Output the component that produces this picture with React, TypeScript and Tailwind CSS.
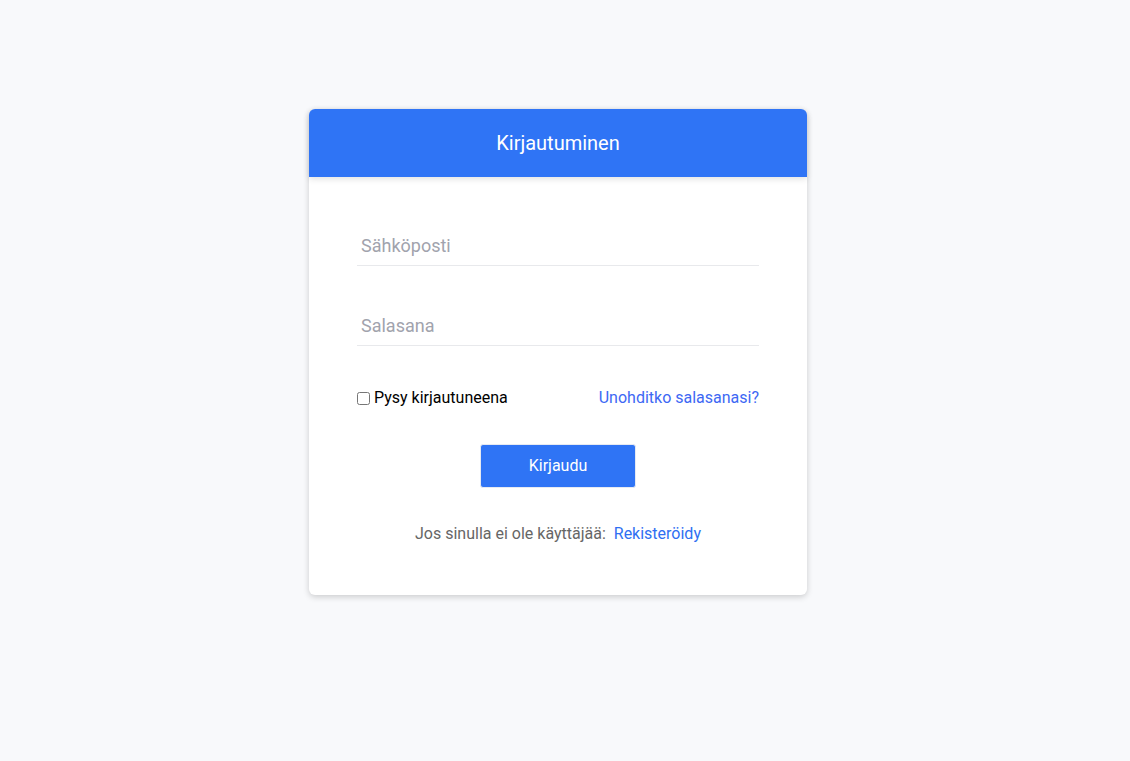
import React from "react";

export default function App() {
  return (
    <div className="min-h-[761px] w-full bg-[#f8f9fb] flex justify-center pt-[109px] pr-[14px]" style={{ fontFamily: "Roboto, 'Noto Sans', sans-serif" }}>
      <div className="w-[498px] h-[486px] bg-white rounded-md shadow-[0_2px_6px_rgba(0,0,0,0.18)] flex flex-col">
        <div className="h-[68px] bg-[#2f74f5] rounded-t-md flex items-center justify-center shadow-[0_2px_6px_rgba(0,0,0,0.12)] relative z-10">
          <h1 className="text-white text-[20px] leading-none">Kirjautuminen</h1>
        </div>
        <form className="px-12 pt-[49px] flex flex-col" onSubmit={(e) => e.preventDefault()}>
          <input
            type="email"
            placeholder="Sähköposti"
            className="h-10 w-full border-0 border-b border-[#e8e9ec] px-1 text-[18px] text-gray-800 placeholder:text-[#a1a3ad] outline-none bg-transparent"
          />
          <input
            type="password"
            placeholder="Salasana"
            className="mt-10 h-10 w-full border-0 border-b border-[#e8e9ec] px-1 text-[18px] text-gray-800 placeholder:text-[#a1a3ad] outline-none bg-transparent"
          />
          <div className="mt-10 flex items-center justify-between h-6 text-[16px]">
            <label className="flex items-center text-black">
              <input type="checkbox" className="m-0 mr-1 w-[13px] h-[13px]" />
              <span>Pysy kirjautuneena</span>
            </label>
            <a href="#" className="text-[#3d68f4]">Unohditko salasanasi?</a>
          </div>
          <div className="mt-[34px] flex justify-center">
            <button type="submit" className="w-[156px] h-[44px] bg-[#2f74f5] text-white text-[16px] rounded-[3px] border border-[#e6eaf2]">
              Kirjaudu
            </button>
          </div>
          <p className="mt-[34px] text-center text-[16px] leading-6 text-[#666]">
            Jos sinulla ei ole käyttäjää:&nbsp; <a href="#" className="text-[#2f6ff2]">Rekisteröidy</a>
          </p>
        </form>
      </div>
    </div>
  );
}
